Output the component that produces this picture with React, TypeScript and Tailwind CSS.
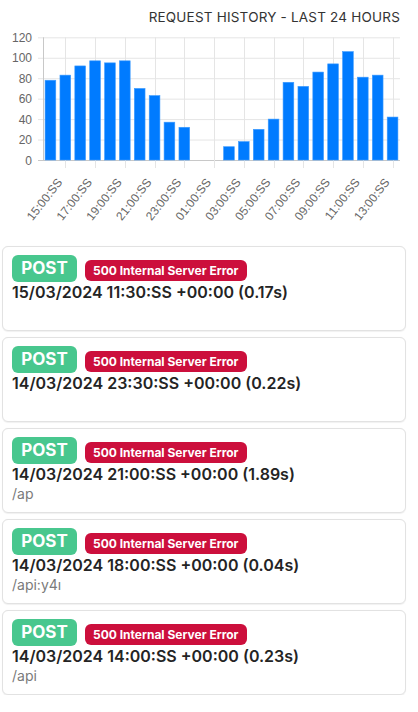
import React from 'react';

const values = [78, 83, 92, 97, 95, 97, 70, 63, 37, 32, 0, 0, 13, 18, 30, 40, 76, 72, 86, 94, 106, 81, 83, 42];
const tickLabels = ['15:00:SS', '17:00:SS', '19:00:SS', '21:00:SS', '23:00:SS', '01:00:SS', '03:00:SS', '05:00:SS', '07:00:SS', '09:00:SS', '11:00:SS', '13:00:SS'];

const X0 = 43;
const X1 = 400;
const Y0 = 160;
const YTOP = 37.3;
const step = (X1 - X0) / values.length;
const barW = 10.7;
const yOf = (v: number) => Y0 - (v / 120) * (Y0 - YTOP);

const HistoryChart: React.FC = () => {
  return (
    <svg width="418" height="232" viewBox="0 0 418 232" className="block">
      {/* horizontal grid */}
      {[0, 20, 40, 60, 80, 100, 120].map((v) => (
        <g key={v}>
          <line x1={X0 - 5} x2={X1} y1={yOf(v) + 0.5} y2={yOf(v) + 0.5} stroke={v === 0 ? '#c8c8c8' : '#e5e5e5'} strokeWidth="1" />
          <text x="32" y={yOf(v) + 4.5} textAnchor="end" fontSize="12" fill="#666" fontFamily="'Liberation Sans', Arial, sans-serif">
            {v}
          </text>
        </g>
      ))}
      {/* vertical grid */}
      <line x1={X0 + 0.5} x2={X0 + 0.5} y1={YTOP} y2={Y0} stroke="#c8c8c8" />
      {tickLabels.map((label, i) => {
        const x = X0 + (2 * i + 1.5) * step;
        const ax = x - 5.5;
        const ay = Y0 + 20;
        return (
          <g key={label}>
            <line x1={Math.round(x) + 0.5} x2={Math.round(x) + 0.5} y1={YTOP} y2={Y0 + 8} stroke="#e5e5e5" />
            <text
              x={ax}
              y={ay}
              textAnchor="end"
              dominantBaseline="central"
              fontSize="12"
              fill="#666"
              fontFamily="'Liberation Sans', Arial, sans-serif"
              transform={`rotate(-52 ${ax} ${ay})`}
            >
              {label}
            </text>
          </g>
        );
      })}
      {/* bars */}
      {values.map((v, i) =>
        v > 0 ? (
          <rect key={i} x={X0 + i * step + (step - barW) / 2} y={yOf(v)} width={barW} height={Y0 - yOf(v)} fill="#007bff" stroke="#3d9bff" strokeWidth="0.6" />
        ) : null
      )}
    </svg>
  );
};

interface Req {
  date: string;
  path: string;
}

const requests: Req[] = [
  { date: '15/03/2024 11:30:SS +00:00 (0.17s)', path: '' },
  { date: '14/03/2024 23:30:SS +00:00 (0.22s)', path: '' },
  { date: '14/03/2024 21:00:SS +00:00 (1.89s)', path: '/ap' },
  { date: '14/03/2024 18:00:SS +00:00 (0.04s)', path: '/api:y4ı' },
  { date: '14/03/2024 14:00:SS +00:00 (0.23s)', path: '/api' },
];

const RequestCard: React.FC<{ req: Req }> = ({ req }) => (
  <div className="h-[85px] rounded-[6px] border border-[#e2e2e2] bg-white px-[9px] pt-[8px] shadow-[0_0.5px_1px_rgba(0,0,0,0.06)]">
    <div className="flex items-end gap-[8px]">
      <span className="flex h-[27px] w-[65px] items-center justify-center rounded-[6px] bg-[#48c78e] text-[17px] font-bold text-white">POST</span>
      <span className="mb-[1px] flex h-[21px] items-center rounded-[6px] bg-[#cc0f3c] px-[8px] text-[12px] font-bold text-white">500 Internal Server Error</span>
    </div>
    <div className="text-[16px] leading-[20px] font-semibold text-[#242424]">{req.date}</div>
    {req.path && <div className="mt-[1px] text-[14px] leading-[18px] text-[#7a7a7a]">{req.path}</div>}
  </div>
);

export default function App() {
  return (
    <div className="w-[418px] bg-white font-['Inter',sans-serif]">
      <div className="relative">
        <div className="absolute right-[18px] top-[7px] text-[13.5px] tracking-[0.2px] text-[#333]">REQUEST HISTORY - LAST 24 HOURS</div>
        <HistoryChart />
      </div>
      <div className="mt-[14px] flex w-[406px] flex-col gap-[6px] pl-[2px]">
        {requests.map((r) => (
          <RequestCard key={r.date} req={r} />
        ))}
      </div>
    </div>
  );
}
